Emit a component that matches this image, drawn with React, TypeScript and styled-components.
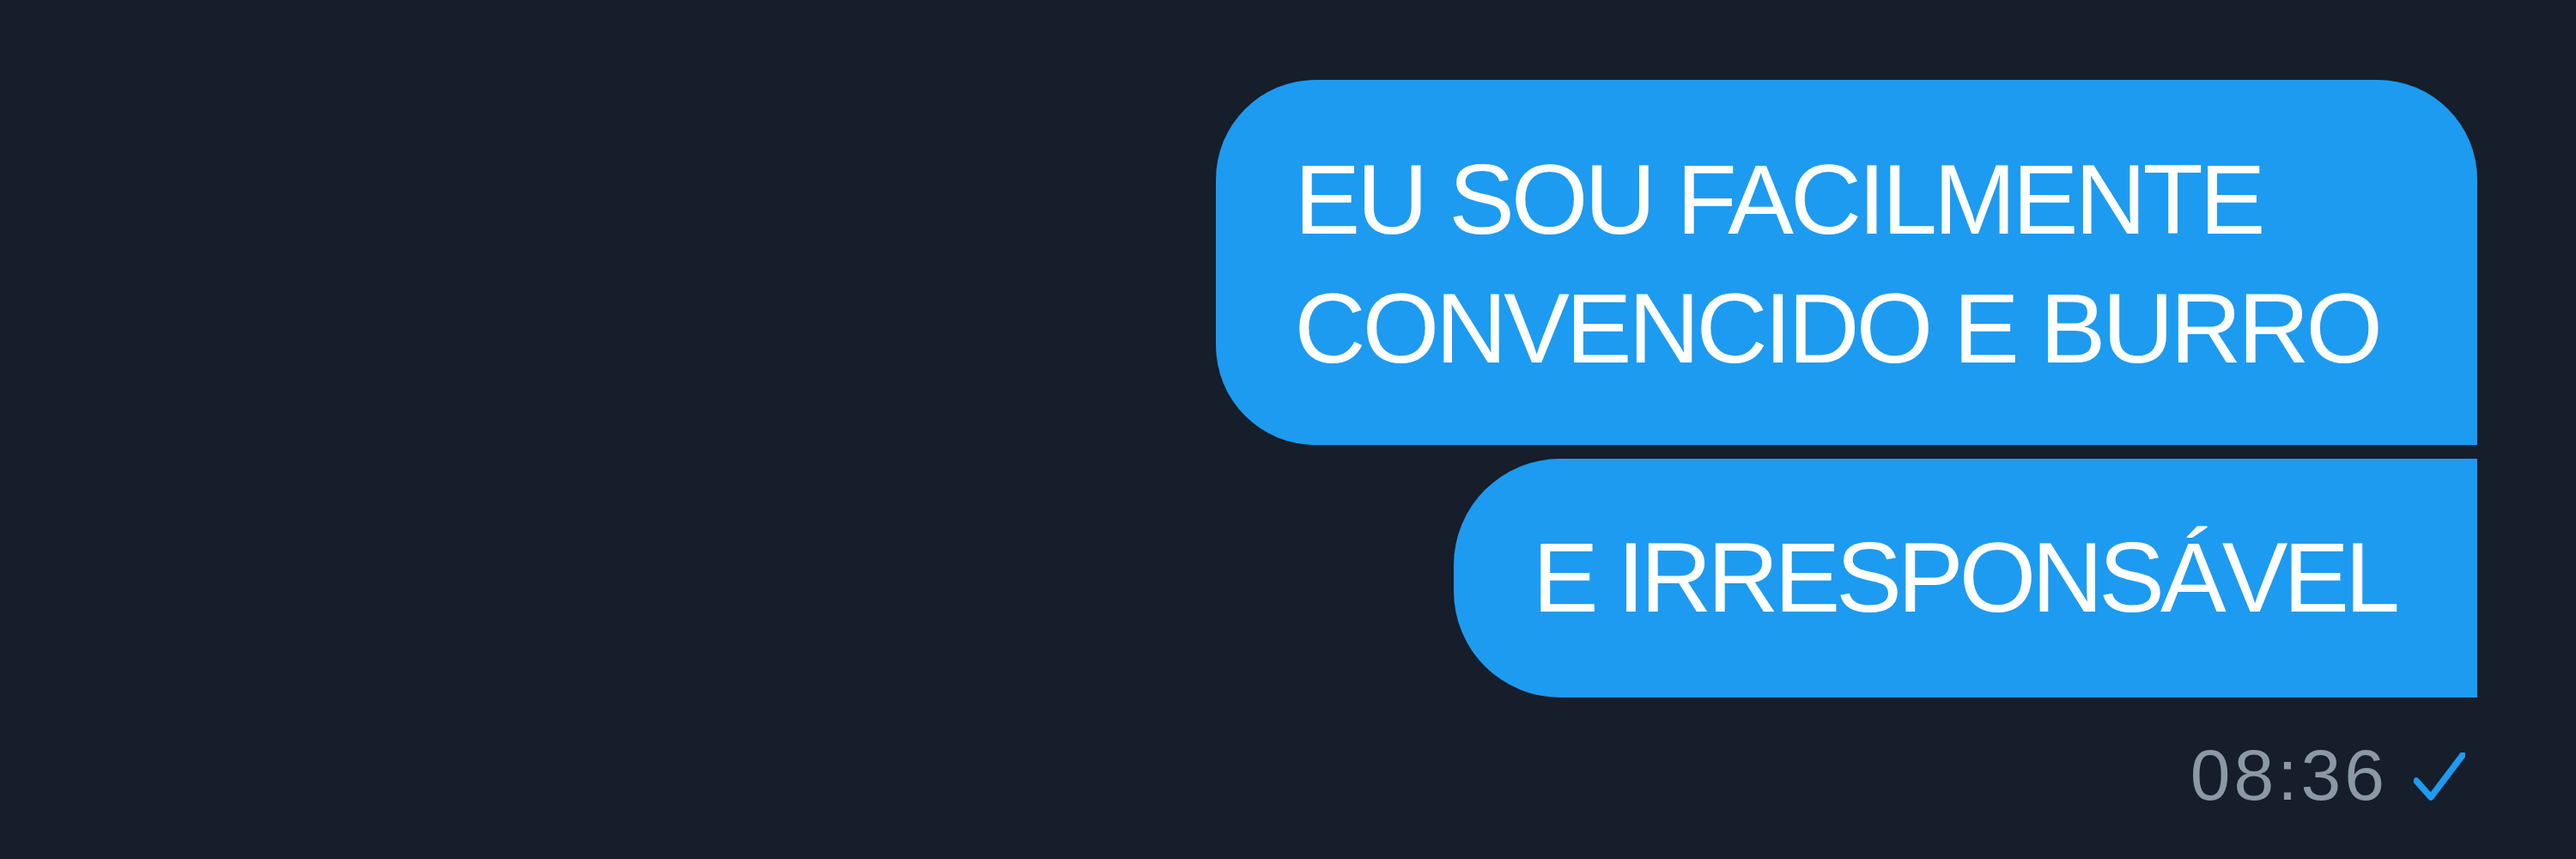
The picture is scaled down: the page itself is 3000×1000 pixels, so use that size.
import styled, { createGlobalStyle } from "styled-components";
import { FC } from "react";

const GlobalStyle = createGlobalStyle`
  html, body {
    margin: 0;
    padding: 0;
    background: #151e2a;
  }
`;

interface BubbleProps {
  $first?: boolean;
}

const App: FC = () => (
  <>
    <GlobalStyle />
    <Page>
      <Thread>
        <Bubble $first>
          EU SOU FACILMENTE
          <br />
          CONVENCIDO E BURRO
        </Bubble>

        <Bubble>E IRRESPONSÁVEL</Bubble>

        <Meta>
          <Time>08:36</Time>
          <Check viewBox="0 0 60 56" width={60} height={56}>
            <path
              d="M3 33 L20 52 L57 3"
              fill="none"
              stroke="#1d9bf0"
              strokeWidth={7.5}
              strokeLinecap="round"
              strokeLinejoin="round"
            />
          </Check>
        </Meta>
      </Thread>
    </Page>
  </>
);

export default App;

// styled components

const Page = styled.div`
  width: 3000px;
  height: 1000px;
  background: #151e2a;
  display: flex;
  justify-content: flex-end;
  padding: 93px 115px 0 0;
  box-sizing: border-box;
  font-family: "Liberation Sans", Arial, sans-serif;
`;

const Thread = styled.div`
  display: flex;
  flex-direction: column;
  align-items: flex-end;
  gap: 16px;
`;

const Bubble = styled.div<BubbleProps>`
  background: #1d9bf0;
  color: #ffffff;
  font-size: 115px;
  line-height: 150px;
  letter-spacing: ${({ $first }) => ($first ? "-4px" : "-5px")};
  white-space: nowrap;
  padding: ${({ $first }) => ($first ? "64px 114px 61px 92px" : "63px 95px 65px 92px")};
  border-radius: ${({ $first }) => ($first ? "116px 116px 0 116px" : "124px 0 0 124px")};
`;

const Meta = styled.div`
  display: flex;
  align-items: center;
  gap: 30px;
  padding: 26px 14px 0 0;
`;

const Time = styled.span`
  font-size: 84px;
  line-height: 96px;
  letter-spacing: 4px;
  color: #8b98a5;
`;

const Check = styled.svg`
  display: block;
  margin-top: 4px;
`;
